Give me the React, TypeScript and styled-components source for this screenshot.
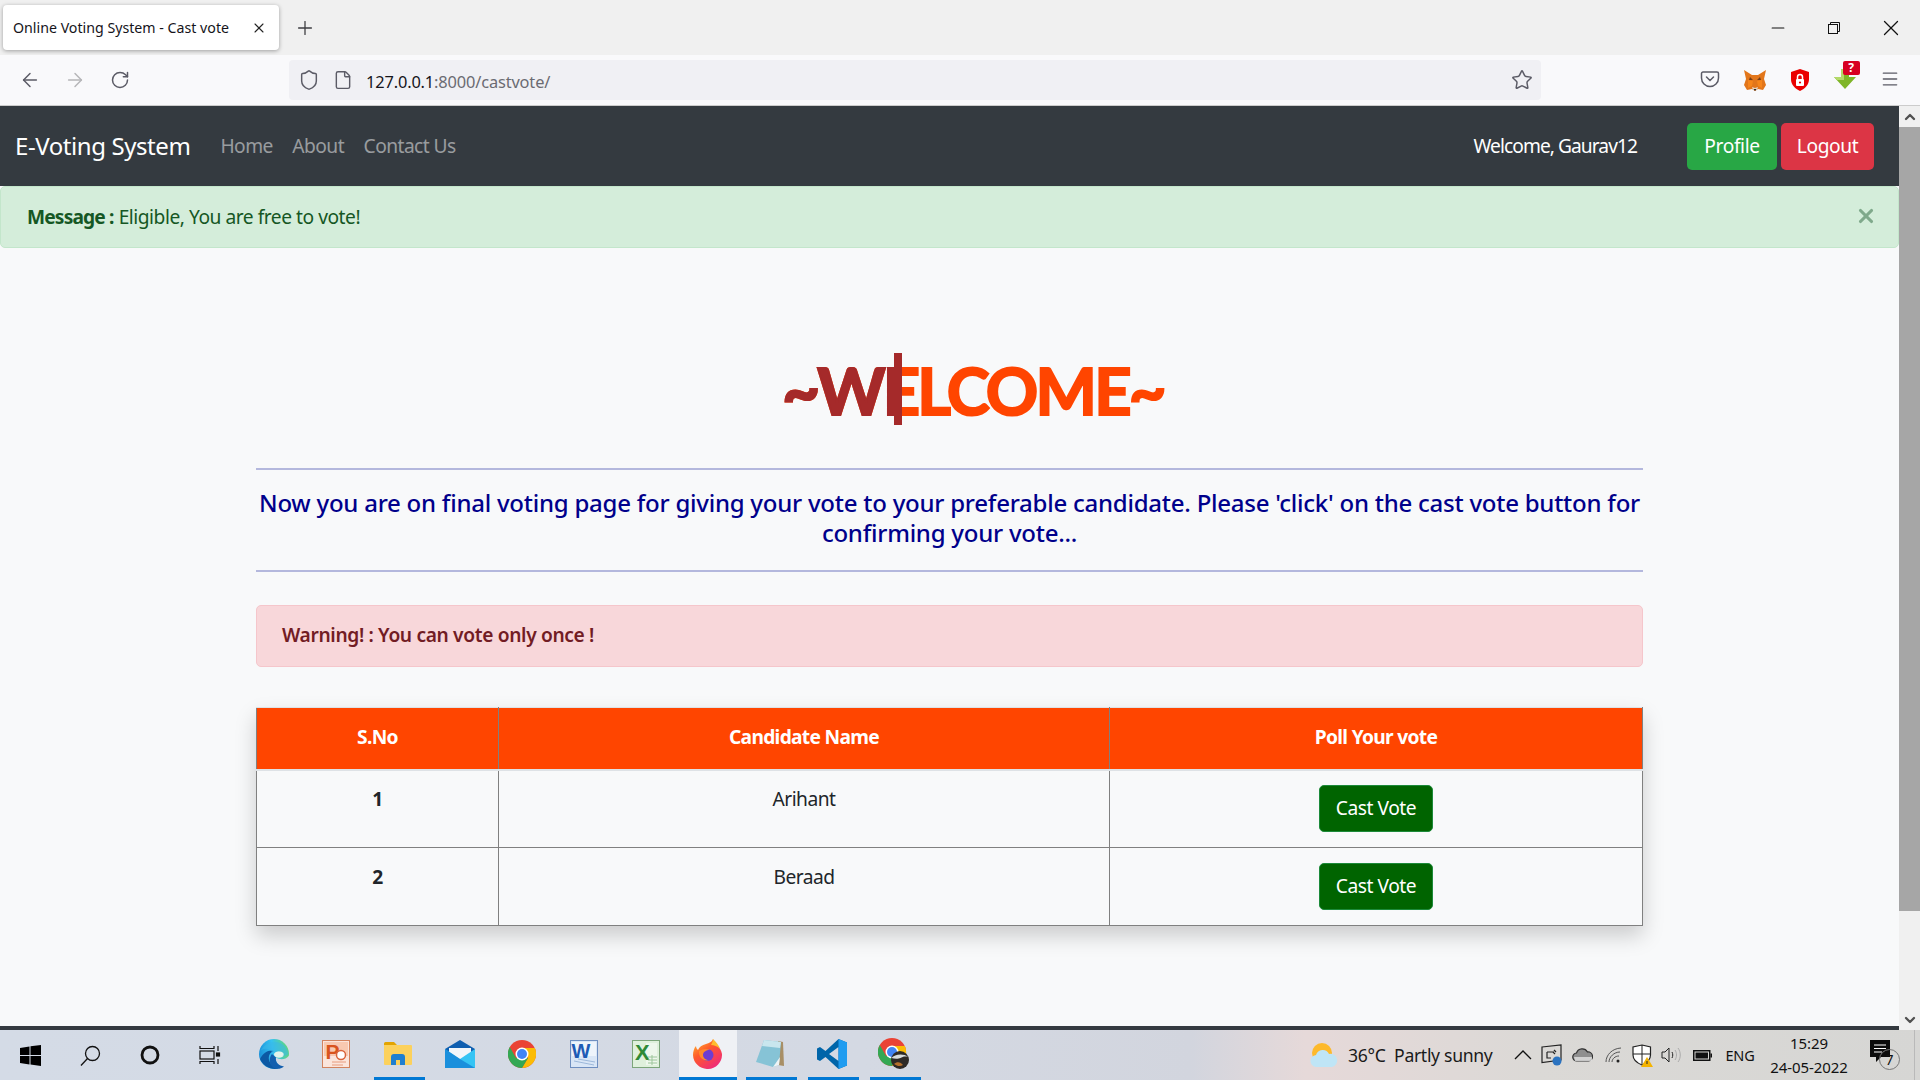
import React from "react";
import styled, { createGlobalStyle } from "styled-components";
import { ArrowLeft, ArrowRight, RotateCw, Shield, File, Star, Menu, X, Plus, Minus, ChevronUp, ChevronDown } from "lucide-react";

const UI = `"Noto Sans", "Open Sans", sans-serif`;
const WEB = `"Noto Sans", "Open Sans", sans-serif`;

const Global = createGlobalStyle`
  html, body { margin: 0; padding: 0; height: 100%; overflow: hidden; background: #f8f9fa; }
  * { box-sizing: border-box; }
`;
const Screen = styled.div`width:1920px;height:1080px;display:flex;flex-direction:column;overflow:hidden;`;

/* ---------- browser chrome ---------- */
const TabStrip = styled.div`height:55px;flex:none;background:#f0f0f0;display:flex;align-items:center;padding-left:3px;`;
const Tab = styled.div`width:276px;height:45px;background:#fff;border-radius:4px;box-shadow:0 1px 4px rgba(0,0,0,.35);display:flex;align-items:center;justify-content:space-between;padding:0 12px 0 10px;`;
const TabTitle = styled.span`font:14.2px ${UI};color:#15141a;letter-spacing:0;white-space:nowrap;`;
const NewTab = styled.div`width:52px;display:flex;justify-content:center;color:#3d3d41;`;
const WindowControls = styled.div`margin-left:auto;display:flex;height:100%;align-items:center;padding-right:1px;`;
const WinBtn = styled.div`width:56.5px;display:flex;justify-content:center;color:#111;`;
const Toolbar = styled.div`height:51px;flex:none;background:#f9f9fb;border-bottom:1px solid #ccc;display:flex;align-items:center;padding:0 7.5px;`;
const ToolBtn = styled.div<{ $faded?: boolean }>`width:45px;display:flex;justify-content:center;color:${p => p.$faded ? "#b5b5b8" : "#5b5b66"};position:relative;`;
const UrlBar = styled.div`margin-left:146.5px;width:1252px;height:40px;background:#f0f0f4;border-radius:4px;display:flex;align-items:center;padding:0 8px 0 9px;color:#5b5b66;`;
const UrlIcon = styled.span<{ $w: number }>`display:flex;width:${p => p.$w}px;`;
const UrlText = styled.span`font:16.4px ${UI};color:#15141a;letter-spacing:-.15px;padding-top:2px;`;
const UrlDim = styled.span`color:#6b6b72;`;
const UrlStar = styled.span`margin-left:auto;display:flex;`;
const RightTools = styled.div`margin-left:auto;display:flex;padding-top:2px;`;
const Badge = styled.span`position:absolute;top:-8px;left:20px;width:17px;height:14px;background:#d70022;border-radius:2px;color:#fff;font:bold 12px/14px ${UI};text-align:center;`;

/* ---------- viewport ---------- */
const Viewport = styled.div`flex:1;display:flex;min-height:0;`;
const Page = styled.div`flex:1;display:flex;flex-direction:column;background:#f8f9fa;min-width:0;`;
const Scrollbar = styled.div`width:21px;flex:none;display:flex;flex-direction:column;background:#f0f0f0;`;
const ScrollBtn = styled.div`height:21px;display:flex;align-items:center;justify-content:center;color:#505050;`;
const ScrollThumb = styled.div`height:784px;background:#a6a6a6;`;
const ScrollGap = styled.div`flex:1;`;

const Navbar = styled.nav`height:80px;flex:none;background:#343a40;display:flex;align-items:center;padding:0 25px 0 15px;`;
const Brand = styled.span`font:24px ${WEB};color:#fff;letter-spacing:-.42px;margin-right:30px;padding-bottom:2px;`;
const NavLink = styled.span`font:19.2px ${WEB};color:rgba(255,255,255,.5);margin-right:19.5px;letter-spacing:-.55px;padding-bottom:2px;`;
const Hello = styled.span`margin-left:auto;margin-right:50px;font:19.2px ${WEB};color:#fff;letter-spacing:-.95px;padding-bottom:2px;`;
const NavBtn = styled.button<{ $bg: string; $w: number }>`width:${p => p.$w}px;height:47px;border:0;border-radius:5px;background:${p => p.$bg};color:#fff;font:19.2px ${WEB};letter-spacing:-.4px;padding:0 0 2px;`;
const NavBtns = styled.div`display:flex;gap:4px;`;

const Alert = styled.div`height:62px;flex:none;background:#d4edda;border:1px solid #c3e6cb;border-radius:5px;color:#155724;display:flex;align-items:center;padding:0 21px 2px 26px;font:19.2px ${WEB};letter-spacing:-.47px;`;
const AlertStrong = styled.strong`font-weight:700;margin-right:5px;letter-spacing:-.85px;`;
const AlertClose = styled.span`margin-left:auto;display:flex;color:#7fa98b;`;

const Main = styled.main`flex:1;width:1387px;margin:0 auto;padding-top:105px;min-height:0;`;
const HeadingRow = styled.div`height:72px;display:flex;justify-content:center;padding-left:47px;`;
const Heading = styled.h1`position:relative;margin:0;height:72px;font:700 65px/75px "Lato","Noto Sans",sans-serif;letter-spacing:-2.8px;color:#ff4500;white-space:nowrap;-webkit-text-stroke:2px currentColor;`;
const HeadingTyped = styled.span`position:absolute;left:0;top:0;width:120px;height:72px;overflow:hidden;color:#a52a2a;border-right:8px solid #a52a2a;`;
const Rule = styled.hr<{ $top: number }>`margin:${p => p.$top}px 0 0;height:2px;border:0;background:#b4b8dd;`;
const Lead = styled.p`margin:18px 0 0;font:500 24px/30px ${WEB};color:#00008b;text-align:center;letter-spacing:-.24px;`;
const Warning = styled.div`margin-top:33px;height:62px;background:#f8d7da;border:1px solid #f5c6cb;border-radius:5px;color:#721c24;font:600 19.2px ${WEB};letter-spacing:-.35px;display:flex;align-items:center;padding:0 0 3px 25px;`;
const Table = styled.table`margin-top:40px;width:100%;border-collapse:collapse;table-layout:fixed;box-shadow:0 10px 20px rgba(0,0,0,.18);font-family:${WEB};`;
const Th = styled.th`height:62px;background:#ff4500;color:#fff;font:700 19.2px ${WEB};letter-spacing:-.7px;border:1px solid #808080;border-top-color:#dee2e6;border-bottom:2px solid #dee2e6;padding:0 0 3px;`;
const Row = styled.tr<{ $pad: number }>`& > td{padding-top:${p => p.$pad}px;}`;
const Td = styled.td<{ $strong?: boolean }>`height:78px;vertical-align:top;text-align:center;border:1px solid #808080;padding:13px 0 0;font:${p => p.$strong ? 700 : 400} 19.2px/29px ${WEB};letter-spacing:-.5px;color:#212529;`;
const CastBtn = styled.button`display:block;margin:1px auto 0;width:114px;height:47px;background:#006400;border:1px solid #1c8a3a;border-radius:5px;color:#fff;font:19.2px ${WEB};letter-spacing:-.45px;padding:0 0 2px;`;
const FooterBar = styled.div`height:4px;flex:none;background:#343a40;`;

/* ---------- taskbar ---------- */
const Taskbar = styled.div`height:50px;flex:none;display:flex;align-items:stretch;background:linear-gradient(90deg,#d4dbe6 0,#d4d9e3 45%,#d2d5de 62%,#e6d9d9 68%,#dbd9d6 80%,#d6d6d4 100%);`;
const SysSlot = styled.div`width:60px;display:flex;align-items:center;justify-content:center;`;
const Apps = styled.div`display:flex;margin-left:2.5px;`;
const AppSlot = styled.div<{ $open?: boolean; $active?: boolean }>`width:${p => p.$active ? 58 : 62}px;margin:0 ${p => p.$active ? 2 : 0}px;position:relative;display:flex;align-items:center;justify-content:center;background:${p => p.$active ? "#eff1f5" : "transparent"};border-bottom:3px solid transparent;
  &::after{content:"";display:${p => p.$open ? "block" : "none"};position:absolute;left:${p => p.$active ? 0 : 7}px;right:${p => p.$active ? 0 : 4}px;bottom:-3px;height:3px;background:#0078d4;}`;
const Tray = styled.div`margin-left:auto;margin-right:5px;display:flex;align-items:center;border-right:1px solid #b9b9b9;height:100%;`;
const Weather = styled.span`font:17.6px ${UI};color:#1a1a1a;margin:0 15.5px 0 10.5px;white-space:pre;letter-spacing:-.32px;`;
const TrayIcon = styled.span<{ $w: number }>`width:${p => p.$w}px;display:flex;justify-content:center;align-items:center;color:#111;`;
const TrayText = styled.span`font:14.5px ${UI};color:#111;margin:0 11.5px 0 6.5px;letter-spacing:-.2px;`;
const Clock = styled.div`font:15px/24px ${UI};color:#111;text-align:center;width:86px;letter-spacing:-.1px;`;
const Notif = styled.div`position:relative;width:30px;height:30px;margin:0 14px 0 18px;`;
const NotifCount = styled.span`position:absolute;right:0;top:9px;width:21px;height:21px;border:1px solid #777;border-radius:50%;font:14px/19px ${UI};color:#111;text-align:center;`;

/* ---------- drawings ---------- */
const Fox = () => (<svg width="24" height="24" viewBox="0 0 24 24"><path fill="#e2761b" d="M1 1l8 5h6l8-5-2 9 2 6-3 5-5-1-3 2-3-2-5 1-3-5 2-6z"/><path fill="#f6851b" d="M5 11l5 1-1 5-4 2zM19 11l-5 1 1 5 4 2z"/><path fill="#763d16" d="M7 8l3 3-4 0zM17 8l-3 3 4 0z"/><path fill="#e4d4c4" d="M9 18l3 1 3-1-1 3h-4z"/><path fill="#222" d="M10.5 20h3l-1.500 2z"/></svg>);
const RedShield = () => (<svg width="20" height="22" viewBox="0 0 20 22"><path fill="#ea0000" d="M10 0l9 3v7c0 6-4 9.500-9 12C5 19.500 1 16 1 10V3z"/><rect x="6" y="10" width="8" height="7" rx="1" fill="#fff"/><path d="M7.500 10V8a2.500 2.500 0 015 0v2" stroke="#fff" strokeWidth="1.500" fill="none"/><circle cx="10" cy="13.500" r="1.100" fill="#ea0000"/></svg>);
const GreenArrow = () => (<svg width="24" height="20" viewBox="0 0 24 20"><path fill="#7fb528" d="M8 0h8v8h7L12 20 1 8h7z"/><path fill="#b3d968" d="M8 0h3v8H8zM1 8h10v3H4z"/></svg>);
const PocketIcon = () => (<svg width="20" height="20" viewBox="0 0 20 20" fill="none" stroke="#5b5b66" strokeWidth="1.500"><path d="M3 3h14a1.500 1.500 0 011.500 1.500V9a8.500 8.500 0 01-17 0V4.500A1.500 1.500 0 013 3z"/><path d="M6.500 8l3.500 3.500L13.500 8" strokeLinecap="round"/></svg>);
const Restore = () => (<svg width="12" height="12" viewBox="0 0 12 12" fill="none" stroke="#111"><rect x=".5" y="2.500" width="9" height="9"/><path d="M2.500 2.500v-2h9v9h-2"/></svg>);

const Win = () => (<svg width="21" height="21" viewBox="0 0 21 21"><path d="M0 3l9.500-1.500V10H0zM10.500 1.300L21 0v10H10.500zM0 11h9.500v8.500L0 18zM10.500 11H21v10l-10.500-1.500z"/></svg>);
const Search = () => (<svg width="21" height="21" viewBox="0 0 21 21" fill="none" stroke="#111" strokeWidth="1.300"><circle cx="12.500" cy="8.500" r="7"/><path d="M7.500 13.500L1 20.500"/></svg>);
const Ring = () => (<svg width="20" height="20" viewBox="0 0 20 20" fill="none" stroke="#111" strokeWidth="2.800"><circle cx="10" cy="10" r="8"/></svg>);
const TaskView = () => (<svg width="22" height="20" viewBox="0 0 22 20" fill="none" stroke="#111" strokeWidth="1.200"><path d="M1 1v2.500h14V1M1 19v-2.500h14V19"/><rect x="1" y="6" width="14" height="8"/><path d="M19 1v5M19 14v5"/><rect x="17.500" y="8" width="3" height="3" fill="#111"/></svg>);
const Edge = () => (<svg width="30" height="30" viewBox="0 0 30 30"><defs><linearGradient id="eg" x1="0" y1=".6" x2="1" y2=".4"><stop offset="0" stopColor="#1a8fd8"/><stop offset=".5" stopColor="#35c1f1"/><stop offset="1" stopColor="#62d87a"/></linearGradient></defs><circle cx="15" cy="15" r="15" fill="url(#eg)"/><path fill="#d4d9e3" d="M30.500 16C27 21 21 21 17 18.500c-1 4 2 8 8 11.500h5.500z"/><path fill="#0c59a4" d="M1 20C4 13 11 10 15 12c-4 1-6 5-5 9 1 4 5 6.500 9.500 8.500C12 31.500 4 27 1 20z"/><path fill="#135fae" d="M17 18.500c-1 4 2 8 8 9-3 2.500-7 3-10 1.500-5-3-5.500-10-2-14 1 1 2.500 2 4 3.500z"/><ellipse cx="20" cy="15.500" rx="5" ry="3.300" fill="#e2f3ea"/><path fill="#3bb8e8" d="M14 15c2-3 6-3.500 9-2 2 1 2 3 .5 3.500 2.500.5 5 0 6-1.500C29 8 23 3 16 3 9 3 4 7 1.500 12 5 9 11 8.500 14 15z" opacity=".55"/></svg>);
const Ppt = () => (<svg width="28" height="28" viewBox="0 0 28 28"><rect x=".5" y=".5" width="27" height="27" fill="#fbe5dc" stroke="#d2835f"/><path d="M2 2h24v14H2z" fill="#f7b595" opacity=".6"/><text x="3.500" y="19" fontFamily="Liberation Sans" fontWeight="700" fontSize="21" fill="#d9541e">P</text><circle cx="19" cy="15" r="4.500" fill="#fff" stroke="#d9643b" strokeWidth="1.500"/><path d="M10 22h14M10 25h11" stroke="#e89a7d"/></svg>);
const Folder = () => (<svg width="28" height="24" viewBox="0 0 28 24"><path fill="#e3a400" d="M0 1.500A1.500 1.500 0 011.500 0H10l3 3h-13z"/><path fill="#fcd15c" d="M0 3h27a1 1 0 011 1v18a1 1 0 01-1 1H1a1 1 0 01-1-1z"/><path fill="#1f7fd0" d="M7 23V15a3 3 0 013-3h8a3 3 0 013 3v8h-5v-5h-4v5z"/></svg>);
const Mail = () => (<svg width="30" height="28" viewBox="0 0 30 28"><path fill="#0f5fb0" d="M15 0l15 9v5H0V9z"/><path fill="#f2f6fa" d="M4 8h22v8l-11 5-11-5z"/><path fill="#35c4f4" d="M0 9l15 10L30 9v19H0z"/><path fill="#1482d6" d="M0 28V9l15 10 15 9z" opacity=".8"/></svg>);
const Chrome = () => (<svg width="28" height="28" viewBox="0 0 28 28"><circle cx="14" cy="14" r="14" fill="#ea4335"/><path fill="#fbbc05" d="M14 8h12.800A14 14 0 0114 28l6-10z"/><path fill="#34a853" d="M1.800 7L8 18l12 0-6 10A14 14 0 011.800 7z"/><circle cx="14" cy="14" r="6.500" fill="#fff"/><circle cx="14" cy="14" r="5" fill="#4285f4"/></svg>);
const ChromeAvatar = () => (<svg width="31" height="31" viewBox="0 0 31 31"><circle cx="14" cy="14" r="14" fill="#ea4335"/><path fill="#fbbc05" d="M14 8h12.800A14 14 0 0114 28l6-10z"/><path fill="#34a853" d="M1.800 7L8 18l12 0-6 10A14 14 0 011.800 7z"/><circle cx="14" cy="14" r="6.500" fill="#fff"/><circle cx="14" cy="14" r="5" fill="#4285f4"/><circle cx="22" cy="22" r="9" fill="#2e2a26"/><path d="M13.500 20c3-4 12-5 17-1-4-1-6 0-8 1s-6 1-9 0z" fill="#d8dcdc"/><path d="M16 26c3-3 7-2 9 1-3 2-6 1-9-1z" fill="#b5702c"/></svg>);
const Word = () => (<svg width="28" height="28" viewBox="0 0 28 28"><rect x=".5" y=".5" width="27" height="27" fill="#d9e6f6" stroke="#6f8fc0"/><path d="M2 2h24v14H2z" fill="#eef4fb"/><text x="1.500" y="18" fontFamily="Liberation Sans" fontWeight="700" fontSize="20" fill="#1e5bb5">W</text><path d="M4 21l20 4M8 19l17 3" stroke="#9db8da"/></svg>);
const Excel = () => (<svg width="28" height="28" viewBox="0 0 28 28"><rect x=".5" y=".5" width="27" height="27" fill="#dff0dc" stroke="#7ca57a"/><path d="M14 3h11v22H14z" fill="#eef7ec"/><text x="3" y="20" fontFamily="Liberation Sans" fontWeight="700" fontSize="22" fill="#2f8a37">X</text><path d="M16 17h9M16 20h9M16 23h9M20 15v10" stroke="#9cc59a"/></svg>);
const Firefox = () => (<svg width="29" height="30" viewBox="0 0 29 30"><defs><linearGradient id="ff" x1="0" y1="0" x2=".7" y2="1"><stop offset="0" stopColor="#ffc62e"/><stop offset=".45" stopColor="#ff5a2a"/><stop offset="1" stopColor="#ee2a7b"/></linearGradient></defs><path fill="url(#ff)" d="M20 0c1 4 8 8 9 15A14.500 14.500 0 110 16C0 13 1 9 3 7c0 2 1 3 2 4 1-3 4-5 8-6 3-1 6-2 7-5z"/><path fill="#ffbd2e" d="M20 0c3 3 6 6 7 10-3-3-6-4-9-4 1-2 2-4 2-6z"/><circle cx="14.500" cy="16" r="6" fill="#6d3dd1"/><path fill="#ff8a2a" d="M6 12c3-2 8-3 11-1-4 0-7 2-7 5s3 5 6 5c-5 2-11-3-10-9z"/></svg>);
const Notepad = () => (<svg width="28" height="29" viewBox="0 0 28 29"><path fill="#a88f66" d="M22 2l5 1 1 24-6-1z"/><path fill="#86c3d6" d="M8 1l17 2-2 23-6 2L0 23z"/><path fill="#c9e6ee" d="M8 1l17 2-1 6L6 7z"/><path fill="#eef3f5" d="M17 28l6-2 1-8z"/></svg>);
const VSCode = () => (<svg width="30" height="30" viewBox="0 0 30 30"><path fill="#0065a9" d="M21.500 0L8.500 12 3 8 0 9.500v11L3 22l5.500-4 13 12 8.500-3.500V3.500zM21.500 8v14L12 15z"/><path fill="#1f9cf0" d="M21.500 0L30 3.500v23L21.500 30z"/></svg>);
const Sun = () => (<svg width="28" height="24" viewBox="0 0 28 24"><circle cx="12" cy="10" r="10" fill="#fdb92b"/><path fill="#bfe5f6" d="M7 24a6 6 0 01-1-12 7 7 0 0113-1 6.500 6.500 0 013 13z"/></svg>);
const Caret = () => (<svg width="18" height="10" viewBox="0 0 18 10" fill="none" stroke="#111" strokeWidth="1.300"><path d="M1 9l8-8 8 8"/></svg>);
const Update = () => (<svg width="22" height="22" viewBox="0 0 22 22" fill="none" stroke="#222" strokeWidth="1.200"><path d="M1 3l19-2v15l-19 2.500z"/><path d="M6 8h7M6 8v6h4M14 10l-2-2M13 6l2 2" /><circle cx="16" cy="17" r="4.500" fill="#2b73c0" stroke="none"/></svg>);
const Cloud = () => (<svg width="21" height="14" viewBox="0 0 21 14"><path d="M5 13a4 4 0 01-.5-8A6 6 0 0115.500 4a4.500 4.500 0 011 9z" fill="#8f8f8f" stroke="#333" strokeWidth="1.200"/><path d="M2 9h18v4H3z" fill="#e8e8e8" opacity=".75"/></svg>);
const Wifi = () => (<svg width="17" height="16" viewBox="0 0 17 16" fill="none" stroke="#555" strokeWidth="1"><path d="M1 15C1 8 7 1.500 16 1M4 15c0-5 5-10 11-10M7 15c0-3 3-6 7-6"/><circle cx="13" cy="14" r="1.500" fill="#222" stroke="none"/></svg>);
const DefShield = () => (<svg width="21" height="23" viewBox="0 0 21 23"><path d="M10 1l8.500 2v8c0 5-4 8-8.500 10C5 19 1 16 1 11V3z" fill="#fff" stroke="#222" strokeWidth="1.200"/><path d="M10 1v20M1 10h18" stroke="#222"/><path d="M15 13l6 10H9z" fill="#f5b400"/><path d="M15 17v3" stroke="#222"/></svg>);
const Speaker = () => (<svg width="22" height="16" viewBox="0 0 22 16" fill="none" stroke="#222"><path d="M1 5h3l4-4v14l-4-4H1z"/><path d="M11 5c1 2 1 4 0 6" /><path d="M14 3c2 3 2 7 0 10M17 1c3 4 3 10 0 14" stroke="#aaa"/></svg>);
const Battery = () => (<svg width="19" height="11" viewBox="0 0 19 11"><rect x=".75" y=".75" width="16" height="9.500" fill="none" stroke="#111" strokeWidth="1.500"/><rect x="2.500" y="2.500" width="12.500" height="6" fill="#111"/><rect x="17.500" y="3.500" width="1.500" height="4" fill="#111"/></svg>);
const Bubble = () => (<svg width="20" height="22" viewBox="0 0 20 22"><path d="M0 0h20v17h-9l-5 5v-5H0z" fill="#0c0c0c"/><path d="M4 5h12M4 8.500h12M4 12h8" stroke="#fff"/></svg>);

const candidates = [{ n: 1, name: "Arihant", pad: 13 }, { n: 2, name: "Beraad", pad: 14 }];

export default function App() {
  return (
    <Screen>
      <Global />
      <TabStrip>
        <Tab>
          <TabTitle>Online Voting System - Cast vote</TabTitle>
          <X size={16} strokeWidth={1.6} color="#222" />
        </Tab>
        <NewTab><Plus size={22} strokeWidth={1.4} /></NewTab>
        <WindowControls>
          <WinBtn><Minus size={20} strokeWidth={1.4} /></WinBtn>
          <WinBtn><Restore /></WinBtn>
          <WinBtn><X size={26} strokeWidth={1.2} /></WinBtn>
        </WindowControls>
      </TabStrip>
      <Toolbar>
        <ToolBtn><ArrowLeft size={22} strokeWidth={1.6} /></ToolBtn>
        <ToolBtn $faded><ArrowRight size={22} strokeWidth={1.6} /></ToolBtn>
        <ToolBtn><RotateCw size={20} strokeWidth={1.8} /></ToolBtn>
        <UrlBar>
          <UrlIcon $w={35}><Shield size={22} strokeWidth={1.6} /></UrlIcon>
          <UrlIcon $w={33}><File size={20} strokeWidth={1.7} /></UrlIcon>
          <UrlText>127.0.0.1<UrlDim>:8000/castvote/</UrlDim></UrlText>
          <UrlStar><Star size={22} strokeWidth={1.6} /></UrlStar>
        </UrlBar>
        <RightTools>
          <ToolBtn><PocketIcon /></ToolBtn>
          <ToolBtn><Fox /></ToolBtn>
          <ToolBtn><RedShield /></ToolBtn>
          <ToolBtn><GreenArrow /><Badge>?</Badge></ToolBtn>
          <ToolBtn><Menu size={20} strokeWidth={1.6} /></ToolBtn>
        </RightTools>
      </Toolbar>
      <Viewport>
        <Page>
          <Navbar>
            <Brand>E-Voting System</Brand>
            <NavLink>Home</NavLink>
            <NavLink>About</NavLink>
            <NavLink>Contact Us</NavLink>
            <Hello>Welcome, Gaurav12</Hello>
            <NavBtns>
              <NavBtn $bg="#28a745" $w={90}>Profile</NavBtn>
              <NavBtn $bg="#dc3545" $w={93}>Logout</NavBtn>
            </NavBtns>
          </Navbar>
          <Alert>
            <AlertStrong>Message :</AlertStrong> Eligible, You are free to vote!
            <AlertClose><X size={22} strokeWidth={3.4} /></AlertClose>
          </Alert>
          <Main>
            <HeadingRow>
              <Heading>~WELCOME~<HeadingTyped>~WELCOME~</HeadingTyped></Heading>
            </HeadingRow>
            <Rule $top={43} />
            <Lead>Now you are on final voting page for giving your vote to your preferable candidate. Please 'click' on the cast vote button for confirming your vote...</Lead>
            <Rule $top={22} />
            <Warning>Warning! : You can vote only once !</Warning>
            <Table>
              <colgroup><col width="242" /><col width="611" /><col /></colgroup>
              <thead><tr><Th>S.No</Th><Th>Candidate Name</Th><Th>Poll Your vote</Th></tr></thead>
              <tbody>
                {candidates.map(c => (
                  <Row key={c.n} $pad={c.pad}>
                    <Td $strong>{c.n}</Td>
                    <Td>{c.name}</Td>
                    <Td><CastBtn>Cast Vote</CastBtn></Td>
                  </Row>
                ))}
              </tbody>
            </Table>
          </Main>
          <FooterBar />
        </Page>
        <Scrollbar>
          <ScrollBtn><ChevronUp size={16} strokeWidth={3.5} /></ScrollBtn>
          <ScrollThumb />
          <ScrollGap />
          <ScrollBtn><ChevronDown size={16} strokeWidth={3.5} /></ScrollBtn>
        </Scrollbar>
      </Viewport>
      <Taskbar>
        <SysSlot><Win /></SysSlot>
        <SysSlot><Search /></SysSlot>
        <SysSlot><Ring /></SysSlot>
        <SysSlot><TaskView /></SysSlot>
        <Apps>
          <AppSlot><Edge /></AppSlot>
          <AppSlot><Ppt /></AppSlot>
          <AppSlot $open><Folder /></AppSlot>
          <AppSlot><Mail /></AppSlot>
          <AppSlot><Chrome /></AppSlot>
          <AppSlot><Word /></AppSlot>
          <AppSlot><Excel /></AppSlot>
          <AppSlot $open $active><Firefox /></AppSlot>
          <AppSlot $open><Notepad /></AppSlot>
          <AppSlot $open><VSCode /></AppSlot>
          <AppSlot $open><ChromeAvatar /></AppSlot>
        </Apps>
        <Tray>
          <Sun />
          <Weather>36°C  Partly sunny</Weather>
          <TrayIcon $w={29.5}><Caret /></TrayIcon>
          <TrayIcon $w={30}><Update /></TrayIcon>
          <TrayIcon $w={31}><Cloud /></TrayIcon>
          <TrayIcon $w={29.5}><Wifi /></TrayIcon>
          <TrayIcon $w={28.5}><DefShield /></TrayIcon>
          <TrayIcon $w={30.5}><Speaker /></TrayIcon>
          <TrayIcon $w={32}><Battery /></TrayIcon>
          <TrayText>ENG</TrayText>
          <Clock>15:29<br />24-05-2022</Clock>
          <Notif><Bubble /><NotifCount>7</NotifCount></Notif>
        </Tray>
      </Taskbar>
    </Screen>
  );
}
